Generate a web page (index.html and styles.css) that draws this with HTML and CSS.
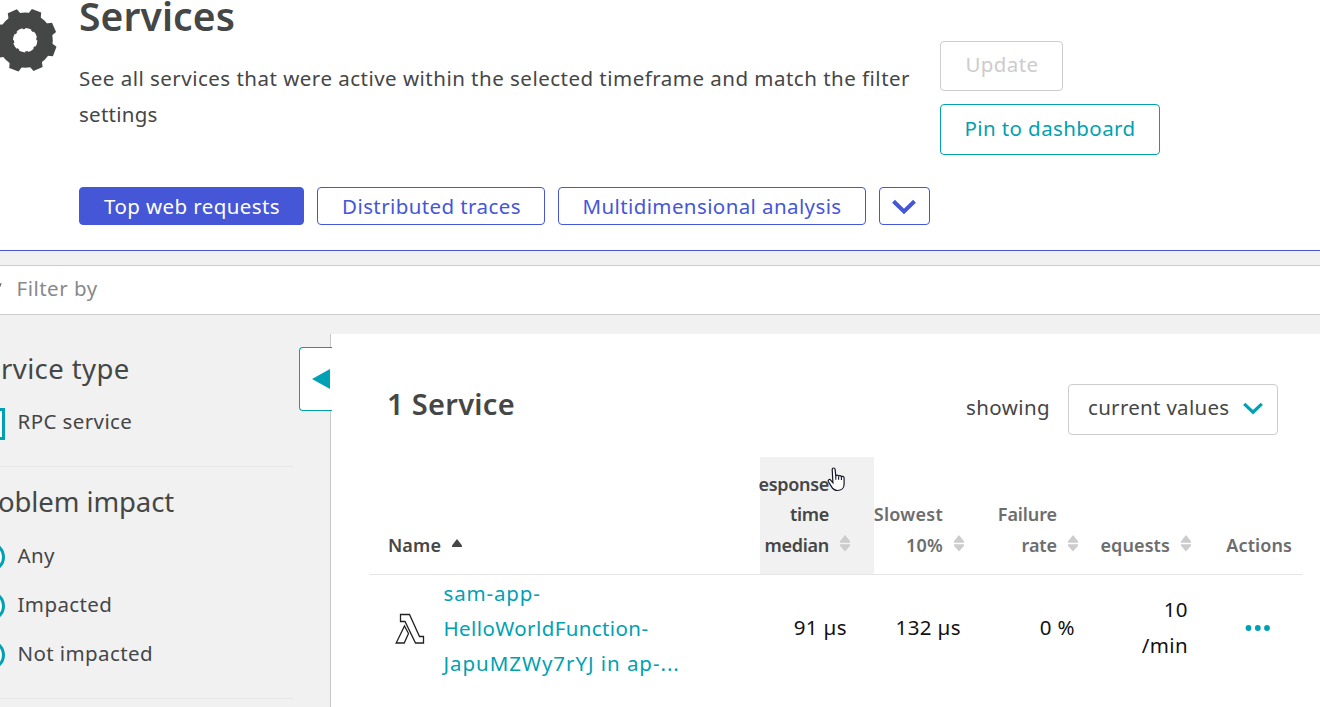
FILE: index.html
```
<!DOCTYPE html>
<html lang="en">
<head>
<meta charset="utf-8">
<title>Services</title>
<link rel="stylesheet" href="styles.css">
</head>
<body>
<svg class="defs" width="0" height="0">
  <defs>
    <path id="tooth" d="M-7.2-24L-5-31.6H5L7.2-24z"/>
    <symbol id="sort" viewBox="0 0 10 17"><path d="M0 7.8V6.3L5 0l5 6.3v1.5zM0 9.2v1.5L5 16.6l5-5.9V9.2z"/></symbol>
  </defs>
</svg>
<header class="header">
  <svg class="gear" width="57" height="74" viewBox="0 0 57 74">
    <g transform="translate(25.2 40.2)">
      <circle r="27.6"/>
      <use href="#tooth" transform="rotate(21)"/><use href="#tooth" transform="rotate(66)"/><use href="#tooth" transform="rotate(111)"/><use href="#tooth" transform="rotate(156)"/><use href="#tooth" transform="rotate(201)"/><use href="#tooth" transform="rotate(246)"/><use href="#tooth" transform="rotate(291)"/><use href="#tooth" transform="rotate(336)"/>
      <circle class="hole" r="11.2"/>
      <circle class="notches" r="11" pathLength="80"/>
    </g>
  </svg>
  <div class="head-main">
    <div class="head-row">
      <div class="intro">
        <h1 class="title">Services</h1>
        <p class="lead"><span class="l1">See all services that were active within the selected timeframe and match the filter</span> <span class="l2">settings</span></p>
      </div>
      <div class="actions">
        <button class="btn btn-update">Update</button>
        <button class="btn btn-pin">Pin to dashboard</button>
      </div>
    </div>
    <nav class="tabs">
      <a class="tab tab-top">Top web requests</a>
      <a class="tab tab-dist">Distributed traces</a>
      <a class="tab tab-multi">Multidimensional analysis</a>
      <a class="tab tab-more"><svg width="24" height="16" viewBox="0 0 24 16"><path d="M1.500 2.300L12 12.500 22.500 2.300" fill="none" stroke="#4556d7" stroke-width="4"/></svg></a>
    </nav>
  </div>
</header>
<div class="filter"><svg width="3" height="10" viewBox="0 0 3 10"><path d="M0 3.500L1 0" stroke="#6d6d6d" stroke-width="1.200" fill="none"/></svg><span class="filter-text">Filter by</span></div>
<main class="body">
  <aside class="side">
    <section class="group group-type">
      <h2 class="side-title type-title">rvice type</h2>
      <label class="opt"><i class="check"></i><span class="o-rpc">RPC service</span></label>
    </section>
    <section class="group group-impact">
      <h2 class="side-title impact-title">oblem impact</h2>
      <label class="opt"><i class="radio"></i><span class="o-any">Any</span></label>
      <label class="opt"><i class="radio"></i><span class="o-imp">Impacted</span></label>
      <label class="opt"><i class="radio"></i><span class="o-not">Not impacted</span></label>
    </section>
    <div class="handle"><svg width="18" height="20" viewBox="0 0 18 20"><path d="M0 10L18 0v20z" fill="#00a1b2"/></svg></div>
  </aside>
  <section class="panel">
    <div class="panel-head">
      <h2 class="count">1 Service</h2>
      <span class="showing">showing</span>
      <div class="select"><span class="sel-text">current values</span><svg width="20" height="14" viewBox="0 0 20 14"><path d="M1.200 1.800L10 10.200 18.800 1.800" fill="none" stroke="#00a1b2" stroke-width="3.200"/></svg></div>
    </div>
    <div class="table">
      <div class="row thead">
        <div class="th th-name"><span class="h-name">Name</span><svg width="10" height="8" viewBox="0 0 10 8"><path d="M0 8V6.600L5 0l5 6.600V8z" fill="#454646"/></svg></div>
        <div class="th hover"><span class="h-resp">esponse<br>time<br>median</span><svg class="sort"><use href="#sort"/></svg>
          <svg class="cursor" width="20" height="26" viewBox="0 0 20 26"><path d="M5.200 2.200c0-1.600 2.700-1.600 2.900 0l.7 7c.1-1.500 2.600-1.300 2.800.2.300-1.200 2.600-1 2.800.6.400-1.100 2.600-.9 2.700.8v6.400c0 4-3 6.300-6.600 6.300-3.300 0-4.900-1.700-6.200-4.100L1.300 14.500c-.7-1.600 1.200-2.700 2.400-1.400L5.900 15.800z" fill="#fff" stroke="#15152a" stroke-width="1.200"/><path d="M8.800 9v3.700M11.600 9.500v3.300M14.400 10v3" stroke="#15152a" stroke-width="1.100"/></svg>
        </div>
        <div class="th"><span class="h-slow">Slowest<br>10%</span><svg class="sort"><use href="#sort"/></svg></div>
        <div class="th"><span class="h-fail">Failure<br>rate</span><svg class="sort"><use href="#sort"/></svg></div>
        <div class="th"><span class="h-req">equests</span><svg class="sort"><use href="#sort"/></svg></div>
        <div class="th th-act"><span class="h-act">Actions</span></div>
      </div>
      <div class="row trow">
        <div class="td td-name">
          <svg width="30" height="32" viewBox="0 0 30 32"><path d="M5.500 1.500H14.500L24.500 23.500H28.500V30H20.500L10 8.500H5.500zM9.500 13L13.500 20.500 9.200 30H1.200z" fill="none" stroke="#222" stroke-width="1.300"/></svg>
          <a class="link"><span class="n1">sam-app-</span><br><span class="n2">HelloWorldFunction-</span><br><span class="n3">JapuMZWy7rYJ in ap-...</span></a>
        </div>
        <div class="td">91 µs</div>
        <div class="td">132 µs</div>
        <div class="td">0 %</div>
        <div class="td">10<br>/min</div>
        <div class="td td-act"><svg width="26" height="8" viewBox="0 0 26 8"><g fill="#00a1b2"><circle cx="3.500" cy="4" r="2.900"/><circle cx="12.800" cy="4" r="2.900"/><circle cx="22" cy="4" r="2.900"/></g></svg></div>
      </div>
    </div>
  </section>
</main>
</body>
</html>
```
FILE: styles.css
```
* { box-sizing: border-box; }
body { margin: 0; width: 1320px; height: 707px; overflow: hidden; background: #f1f1f1; color: #454646; font: 20.5px/36px "Noto Sans", "Open Sans", sans-serif; letter-spacing: .4px; }
h1, h2, p { margin: 0; }
.defs { display: block; height: 0; }
svg { display: block; flex: none; }
.header { display: flex; height: 251px; overflow: hidden; background: #fff; border-bottom: 1px solid #4556d7; }
.gear { fill: #454646; margin-right: 22px; }
.hole { fill: #fff; }
.notches { fill: none; stroke: #fff; stroke-width: 2.4; stroke-dasharray: 7 3; }
.head-main { flex: none; }
.head-row { display: flex; height: 187px; }
.intro { width: 861px; }
.title { font-size: 39px; line-height: 31px; font-weight: 600; letter-spacing: .1px; }
.lead { margin-top: 29px; }
.l1 { white-space: nowrap; letter-spacing: .485px; }
.l2 { letter-spacing: .25px; }
.actions { display: flex; flex-direction: column; align-items: flex-start; gap: 13px; padding-top: 41px; }
.btn { height: 50px; padding: 0 0 3px; border: 1px solid; border-radius: 4px; background: #fff; font: inherit; letter-spacing: inherit; }
.btn-update { width: 123px; padding: 0 0 4px 1px; color: #ccc; }
.btn-pin { width: 220px; height: 51px; color: #00a1b2; }
.tabs { display: flex; gap: 13px; }
.tab { display: flex; align-items: center; justify-content: center; height: 38px; border: 1px solid #4556d7; border-radius: 4px; color: #4556d7; white-space: nowrap; }
.tab-top { width: 225px; padding-left: 1px; background: #4556d7; color: #fff; }
.tab-dist { width: 228px; padding-left: 1px; }
.tab-multi { width: 308px; }
.tab-more { width: 51px; padding: 2px 1px 0 0; }
.filter { display: flex; align-items: center; height: 50px; margin-top: 14px; padding-bottom: 5px; background: #fff; border: solid #ccc; border-width: 1px 0; color: #898989; }
.filter-text { margin-left: 13.5px; letter-spacing: .5px; }
.body { display: flex; height: 373px; margin-top: 19px; }
.side { position: relative; width: 331px; border-right: 1px solid #c7c7c7; }
.group { width: 293px; border-bottom: 1px solid #e6e6e6; }
.group-type { height: 133px; padding-top: 16px; }
.group-impact { height: 232px; padding-top: 16px; }
.side-title { font-size: 27.5px; line-height: 38px; font-weight: 400; white-space: nowrap; }
.type-title { padding-left: 1px; }
.impact-title { margin-left: -2px; letter-spacing: -.1px; }
.opt { display: flex; align-items: center; height: 49px; }
.group-type .opt { margin-top: 10px; }
.group-impact .side-title { margin-bottom: 11px; }
.opt span { margin: -3px 0 0 13px; }
.check, .radio { flex: none; width: 32px; height: 32px; margin-left: -27.5px; border: 3px solid #00a1b2; background: #fff; }
.check { margin: 2px 0 0 -27.5px; }
.radio { width: 30px; height: 30px; margin-left: -25.5px; border-radius: 50%; }
.handle { position: absolute; top: 13px; left: 299px; display: flex; align-items: center; width: 33px; height: 64px; padding-left: 12px; background: #fff; border: 1px solid #00a1b2; border-right: 0; border-radius: 4px 0 0 4px; }
.panel { flex: 1; background: #fff; }
.panel-head { display: flex; align-items: center; height: 123px; padding: 27px 42px 0 56px; }
.count { font-size: 29px; font-weight: 600; letter-spacing: .3px; margin: -11px auto 0 0; }
.showing { margin: -4px 18px 0 0; }
.select { display: flex; align-items: center; justify-content: space-between; width: 210px; height: 51px; padding: 0 14px 0 19px; border: 1px solid #ccc; border-radius: 4px; }
.sel-text { margin-top: -4px; letter-spacing: .3px; }
.table { width: 934px; margin-left: 38px; }
.row { display: grid; grid-template-columns: 391px 114px 114px 114px 113px 88px; }
.thead { height: 118px; border-bottom: 1px solid #e6e6e6; font-size: 18px; line-height: 30.5px; font-weight: 600; color: #6d6d6d; letter-spacing: .1px; }
.th { position: relative; display: flex; align-items: flex-end; justify-content: flex-end; padding: 0 24px 14px 0; text-align: right; white-space: nowrap; }
.th-name { justify-content: flex-start; padding-left: 19px; color: #454646; gap: 11px; }
.th-name svg { margin-bottom: 13px; }
.hover { background: #f1f1f1; color: #454646; }
.h-resp { letter-spacing: -.3px; }
.h-slow { letter-spacing: .25px; }
.h-fail { letter-spacing: -.1px; }
.th-act { padding-right: 11px; }
.sort { width: 10px; height: 17px; margin: 0 0 8px 11px; fill: #ccc; }
.cursor { position: absolute; left: 67px; top: 10px; }
.trow { height: 107px; color: #111; }
.td { display: flex; align-items: center; justify-content: flex-end; padding: 0 27px 3px 0; text-align: right; }
.td-name { justify-content: flex-start; padding: 0 0 0 26px; text-align: left; gap: 18.5px; }
.td-name svg { margin-top: 1px; }
.link { color: #00a1b2; line-height: 35.3px; white-space: nowrap; }
.n1 { letter-spacing: .85px; }
.n3 { letter-spacing: .95px; }
.td-act { padding: 0 32px 1px 0; }
```
